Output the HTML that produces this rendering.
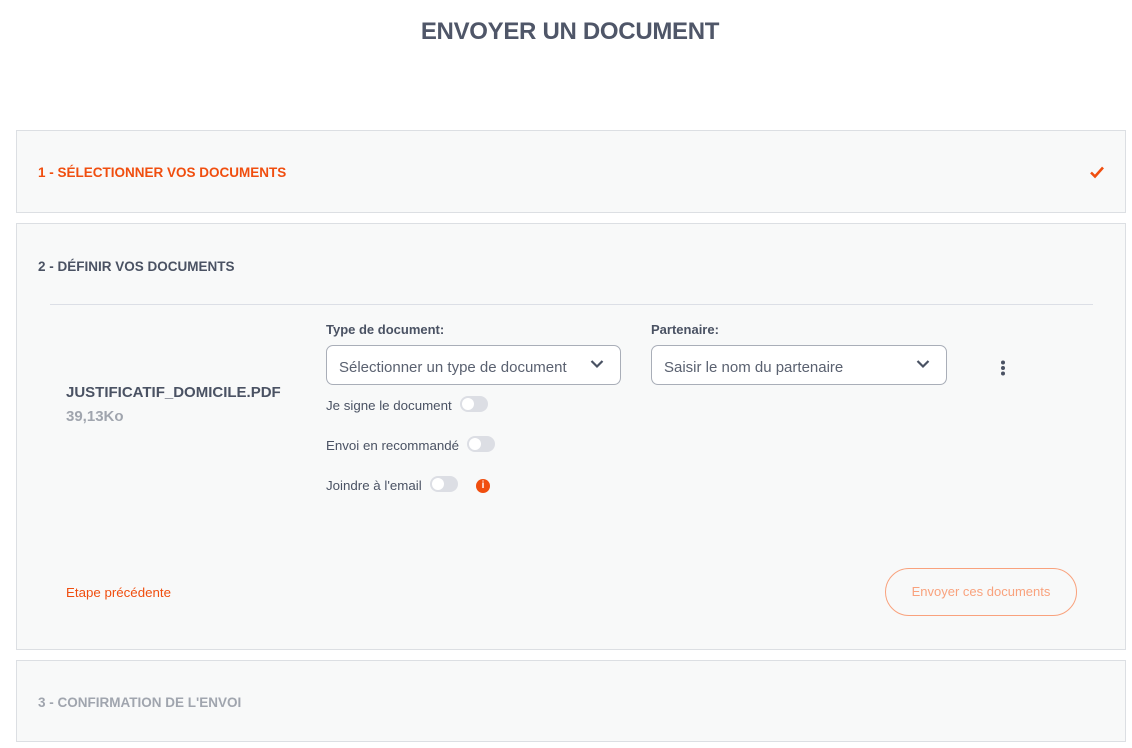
<!DOCTYPE html>
<html><head><meta charset="utf-8"><style>
*{box-sizing:border-box;margin:0;padding:0}
body{width:1132px;height:748px;background:#fff;font-family:"Liberation Sans",sans-serif;color:#4a5263;position:relative;overflow:hidden}
.abs{position:absolute}
h1{position:absolute;top:18px;left:0;width:1140px;text-align:center;font-size:24px;font-weight:bold;color:#4f5668;letter-spacing:-0.3px}
.panel{position:absolute;left:16px;width:1110px;background:#f8f9f9;border:1px solid #dcdfe3}
.ptitle{position:absolute;left:21px;font-size:13.5px;font-weight:bold;letter-spacing:0}
.sel{position:absolute;height:40px;border:1px solid #a9aeb8;border-radius:7px;background:#fff;font-size:15px;color:#5a6170;padding:13px 0 0 12px}
.sel svg{position:absolute;right:16px;top:13px}
.lbl{position:absolute;font-size:13px;font-weight:bold;color:#4a5263}
.tg{position:absolute;font-size:13.3px;color:#4a5263}
.sw{display:inline-block;width:28px;height:16px;border-radius:8px;background:#dcdee4;vertical-align:middle;margin-left:8px;position:relative;top:-2px}
.sw:after{content:"";position:absolute;left:2px;top:2px;width:12px;height:12px;border-radius:50%;background:#fff}
</style></head><body>
<h1>ENVOYER UN DOCUMENT</h1>

<div class="panel" style="top:130px;height:83px">
  <div class="ptitle" style="top:34px;color:#f04e0f">1 - SÉLECTIONNER VOS DOCUMENTS</div>
  <svg class="abs" style="left:1072px;top:34px" width="16" height="14" viewBox="0 0 16 14"><path d="M2 7.5l4 4L14 2.5" fill="none" stroke="#f04e0f" stroke-width="2.6"/></svg>
</div>

<div class="panel" style="top:223px;height:427px">
  <div class="ptitle" style="top:35px;color:#4a5263">2 - DÉFINIR VOS DOCUMENTS</div>
  <div class="abs" style="left:33px;top:80px;width:1043px;height:1px;background:#dcdfe6"></div>
  <div class="abs" style="left:49px;top:160px;font-size:15px;font-weight:bold;color:#4a5263">JUSTIFICATIF_DOMICILE.PDF</div>
  <div class="abs" style="left:49px;top:184px;font-size:15px;font-weight:bold;color:#a0a5ae">39,13Ko</div>

  <div class="lbl" style="left:309px;top:98px">Type de document:</div>
  <div class="sel" style="left:309px;top:121px;width:295px">Sélectionner un type de document
    <svg width="14" height="10" viewBox="0 0 14 10"><path d="M1.5 2l5.5 5.5L12.5 2" fill="none" stroke="#4a5263" stroke-width="2.2"/></svg></div>
  <div class="lbl" style="left:634px;top:98px">Partenaire:</div>
  <div class="sel" style="left:634px;top:121px;width:296px">Saisir le nom du partenaire
    <svg width="14" height="10" viewBox="0 0 14 10"><path d="M1.5 2l5.5 5.5L12.5 2" fill="none" stroke="#4a5263" stroke-width="2.2"/></svg></div>
  <svg class="abs" style="left:983px;top:136px" width="6" height="16" viewBox="0 0 6 16"><circle cx="3" cy="2.5" r="2" fill="#4a5263"/><circle cx="3" cy="8" r="2" fill="#4a5263"/><circle cx="3" cy="13.5" r="2" fill="#4a5263"/></svg>

  <div class="tg" style="left:309px;top:174px">Je signe le document<span class="sw"></span></div>
  <div class="tg" style="left:309px;top:214px">Envoi en recommandé<span class="sw"></span></div>
  <div class="tg" style="left:309px;top:254px">Joindre à l'email<span class="sw"></span></div>
  <div class="abs" style="left:459px;top:255px;width:14px;height:14px;border-radius:50%;background:#f04e0f;color:#fff;font-size:10px;font-weight:bold;text-align:center;line-height:14px">i</div>

  <div class="abs" style="left:49px;top:361px;font-size:13.3px;color:#f04e0f">Etape précédente</div>
  <div class="abs" style="left:868px;top:344px;width:192px;height:48px;border:1px solid #f9a27d;border-radius:24px;color:#f9a27d;font-size:13px;text-align:center;line-height:46px">Envoyer ces documents</div>
</div>

<div class="panel" style="top:660px;height:82px">
  <div class="ptitle" style="top:34px;color:#a0a5ae">3 - CONFIRMATION DE L'ENVOI</div>
</div>
</body></html>
